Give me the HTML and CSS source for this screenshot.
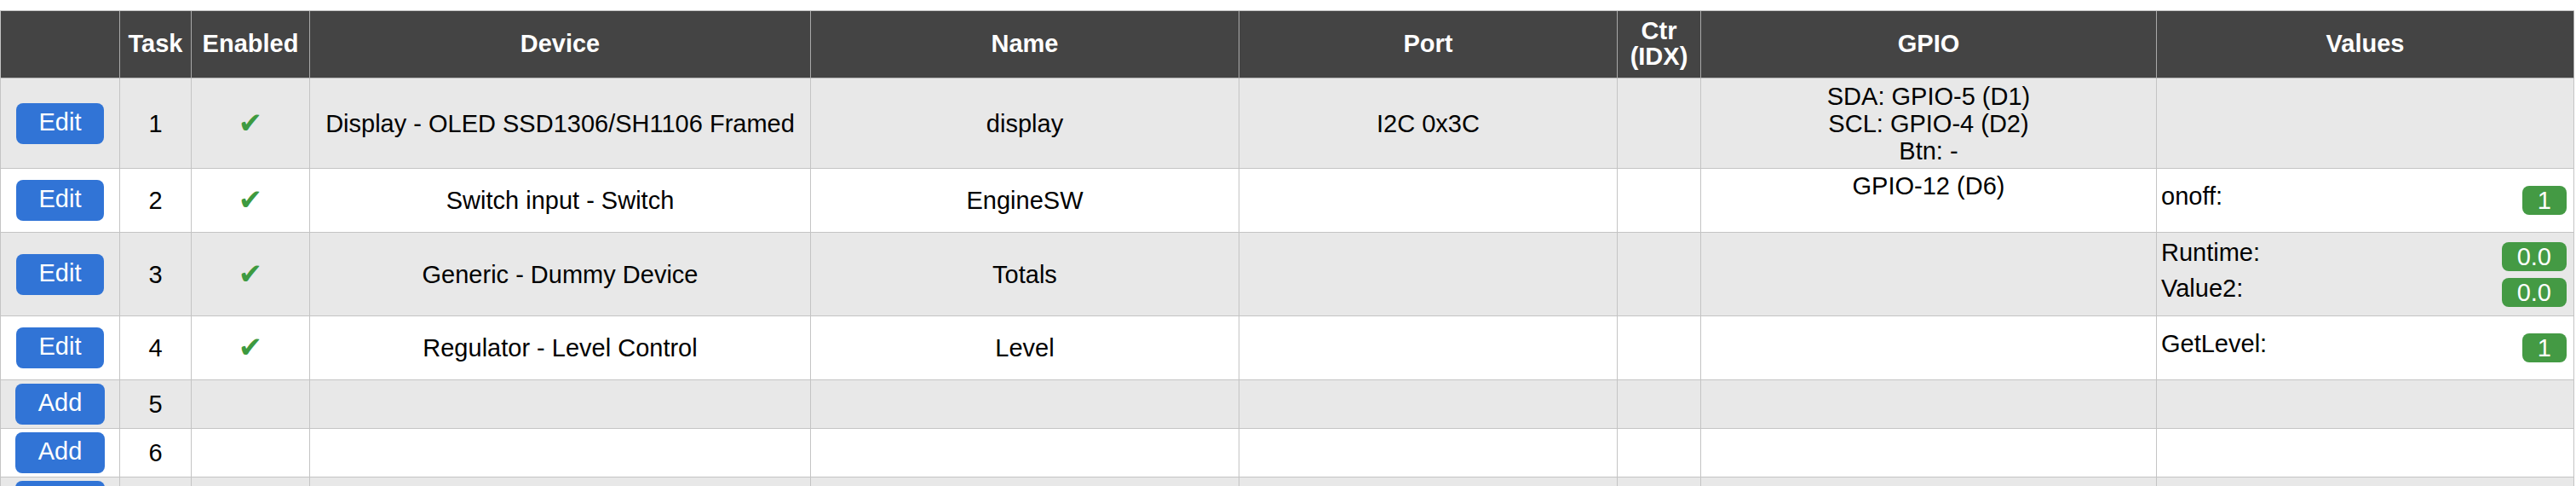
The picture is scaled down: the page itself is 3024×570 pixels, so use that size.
FILE: index.html
```html
<!DOCTYPE html>
<html lang="en">
<head>
<meta charset="utf-8">
<title>Devices</title>
<link rel="stylesheet" href="styles.css">
</head>
<body>
<table class="devices">
  <colgroup>
    <col class="c-btn"><col class="c-task"><col class="c-en"><col class="c-dev"><col class="c-name"><col class="c-port"><col class="c-ctr"><col class="c-gpio"><col class="c-val">
  </colgroup>
  <thead>
    <tr class="h-head">
      <th></th><th>Task</th><th>Enabled</th><th>Device</th><th>Name</th><th>Port</th><th>Ctr<br>(IDX)</th><th>GPIO</th><th>Values</th>
    </tr>
  </thead>
  <tbody>
    <tr class="h-106">
      <td><a class="button">Edit</a></td>
      <td>1</td>
      <td><span class="check">✔</span></td>
      <td>Display - OLED SSD1306/SH1106 Framed</td>
      <td>display</td>
      <td>I2C 0x3C</td>
      <td></td>
      <td>SDA: GPIO-5 (D1)<br>SCL: GPIO-4 (D2)<br>Btn: -</td>
      <td class="values"></td>
    </tr>
    <tr class="h-75">
      <td><a class="button">Edit</a></td>
      <td>2</td>
      <td><span class="check">✔</span></td>
      <td>Switch input - Switch</td>
      <td>EngineSW</td>
      <td></td>
      <td></td>
      <td class="top">GPIO-12 (D6)</td>
      <td class="values">
        <div class="val"><span class="val-name">onoff:</span><span class="badge">1</span></div>
      </td>
    </tr>
    <tr class="h-98">
      <td><a class="button">Edit</a></td>
      <td>3</td>
      <td><span class="check">✔</span></td>
      <td>Generic - Dummy Device</td>
      <td>Totals</td>
      <td></td>
      <td></td>
      <td></td>
      <td class="values">
        <div class="val"><span class="val-name">Runtime:</span><span class="badge">0.0</span></div>
        <div class="val"><span class="val-name">Value2:</span><span class="badge">0.0</span></div>
      </td>
    </tr>
    <tr class="h-75">
      <td><a class="button">Edit</a></td>
      <td>4</td>
      <td><span class="check">✔</span></td>
      <td>Regulator - Level Control</td>
      <td>Level</td>
      <td></td>
      <td></td>
      <td></td>
      <td class="values">
        <div class="val"><span class="val-name">GetLevel:</span><span class="badge">1</span></div>
      </td>
    </tr>
    <tr class="h-55">
      <td><a class="button">Add</a></td><td>5</td><td></td><td></td><td></td><td></td><td></td><td></td><td></td>
    </tr>
    <tr class="h-54">
      <td><a class="button">Add</a></td><td>6</td><td></td><td></td><td></td><td></td><td></td><td></td><td></td>
    </tr>
    <tr class="h-55">
      <td><a class="button">Add</a></td><td>7</td><td></td><td></td><td></td><td></td><td></td><td></td><td></td>
    </tr>
    <tr class="h-55">
      <td><a class="button">Add</a></td><td>8</td><td></td><td></td><td></td><td></td><td></td><td></td><td></td>
    </tr>
  </tbody>
</table>
</body>
</html>
```

FILE: styles.css
```css
html, body {
  margin: 0;
  padding: 0;
  background: #ffffff;
}

body {
  font-family: "Liberation Sans", Arial, sans-serif;
  font-size: 29px;
  color: #000000;
  padding-top: 12px;
}

.devices {
  table-layout: fixed;
  width: 3022px;
  border-collapse: separate;
  border-spacing: 0;
  border-top: 1px solid #c4c4c4;
  border-left: 1px solid #c4c4c4;
}

.c-btn { width: 140px; }
.c-task { width: 84px; }
.c-en { width: 139px; }
.c-dev { width: 588px; }
.c-name { width: 503px; }
.c-port { width: 444px; }
.c-ctr { width: 98px; }
.c-gpio { width: 535px; }
.c-val { width: 490px; }

.devices th,
.devices td {
  box-sizing: border-box;
  border-right: 1px solid #c4c4c4;
  border-bottom: 1px solid #c4c4c4;
  text-align: center;
  vertical-align: middle;
}

.devices th {
  background: #444444;
  color: #ffffff;
  font-weight: bold;
  line-height: 30px;
  padding: 0 4px 2px;
  border-right-color: #a8a8a8;
  border-bottom-color: #b4b4b4;
}

.devices td {
  padding: 4px;
  line-height: 32px;
}

.devices tbody tr:nth-child(odd) {
  background: #e8e8e8;
}

.h-head { height: 79px; }
.h-106 { height: 106px; }
.h-98 { height: 98px; }
.h-75 { height: 75px; }
.h-55 { height: 55px; }
.h-54 { height: 54px; }

.devices td.top {
  vertical-align: top;
}

.button {
  display: inline-block;
  background: #3174d6;
  color: #ffffff;
  border-radius: 8px;
  padding: 0 27px 4px;
  line-height: 44px;
  text-decoration: none;
}

.check {
  font-family: "DejaVu Sans", sans-serif;
  color: #3d9a40;
  font-size: 34px;
}

.devices td.values {
  text-align: left;
}

.val {
  display: flex;
  justify-content: space-between;
  align-items: flex-start;
}

.val-name {
  line-height: 32px;
  padding-left: 1px;
}

.badge {
  margin: 4px;
  padding: 1px 18px;
  border-radius: 8px;
  background: #449a44;
  color: #ffffff;
  line-height: 32px;
}
```
